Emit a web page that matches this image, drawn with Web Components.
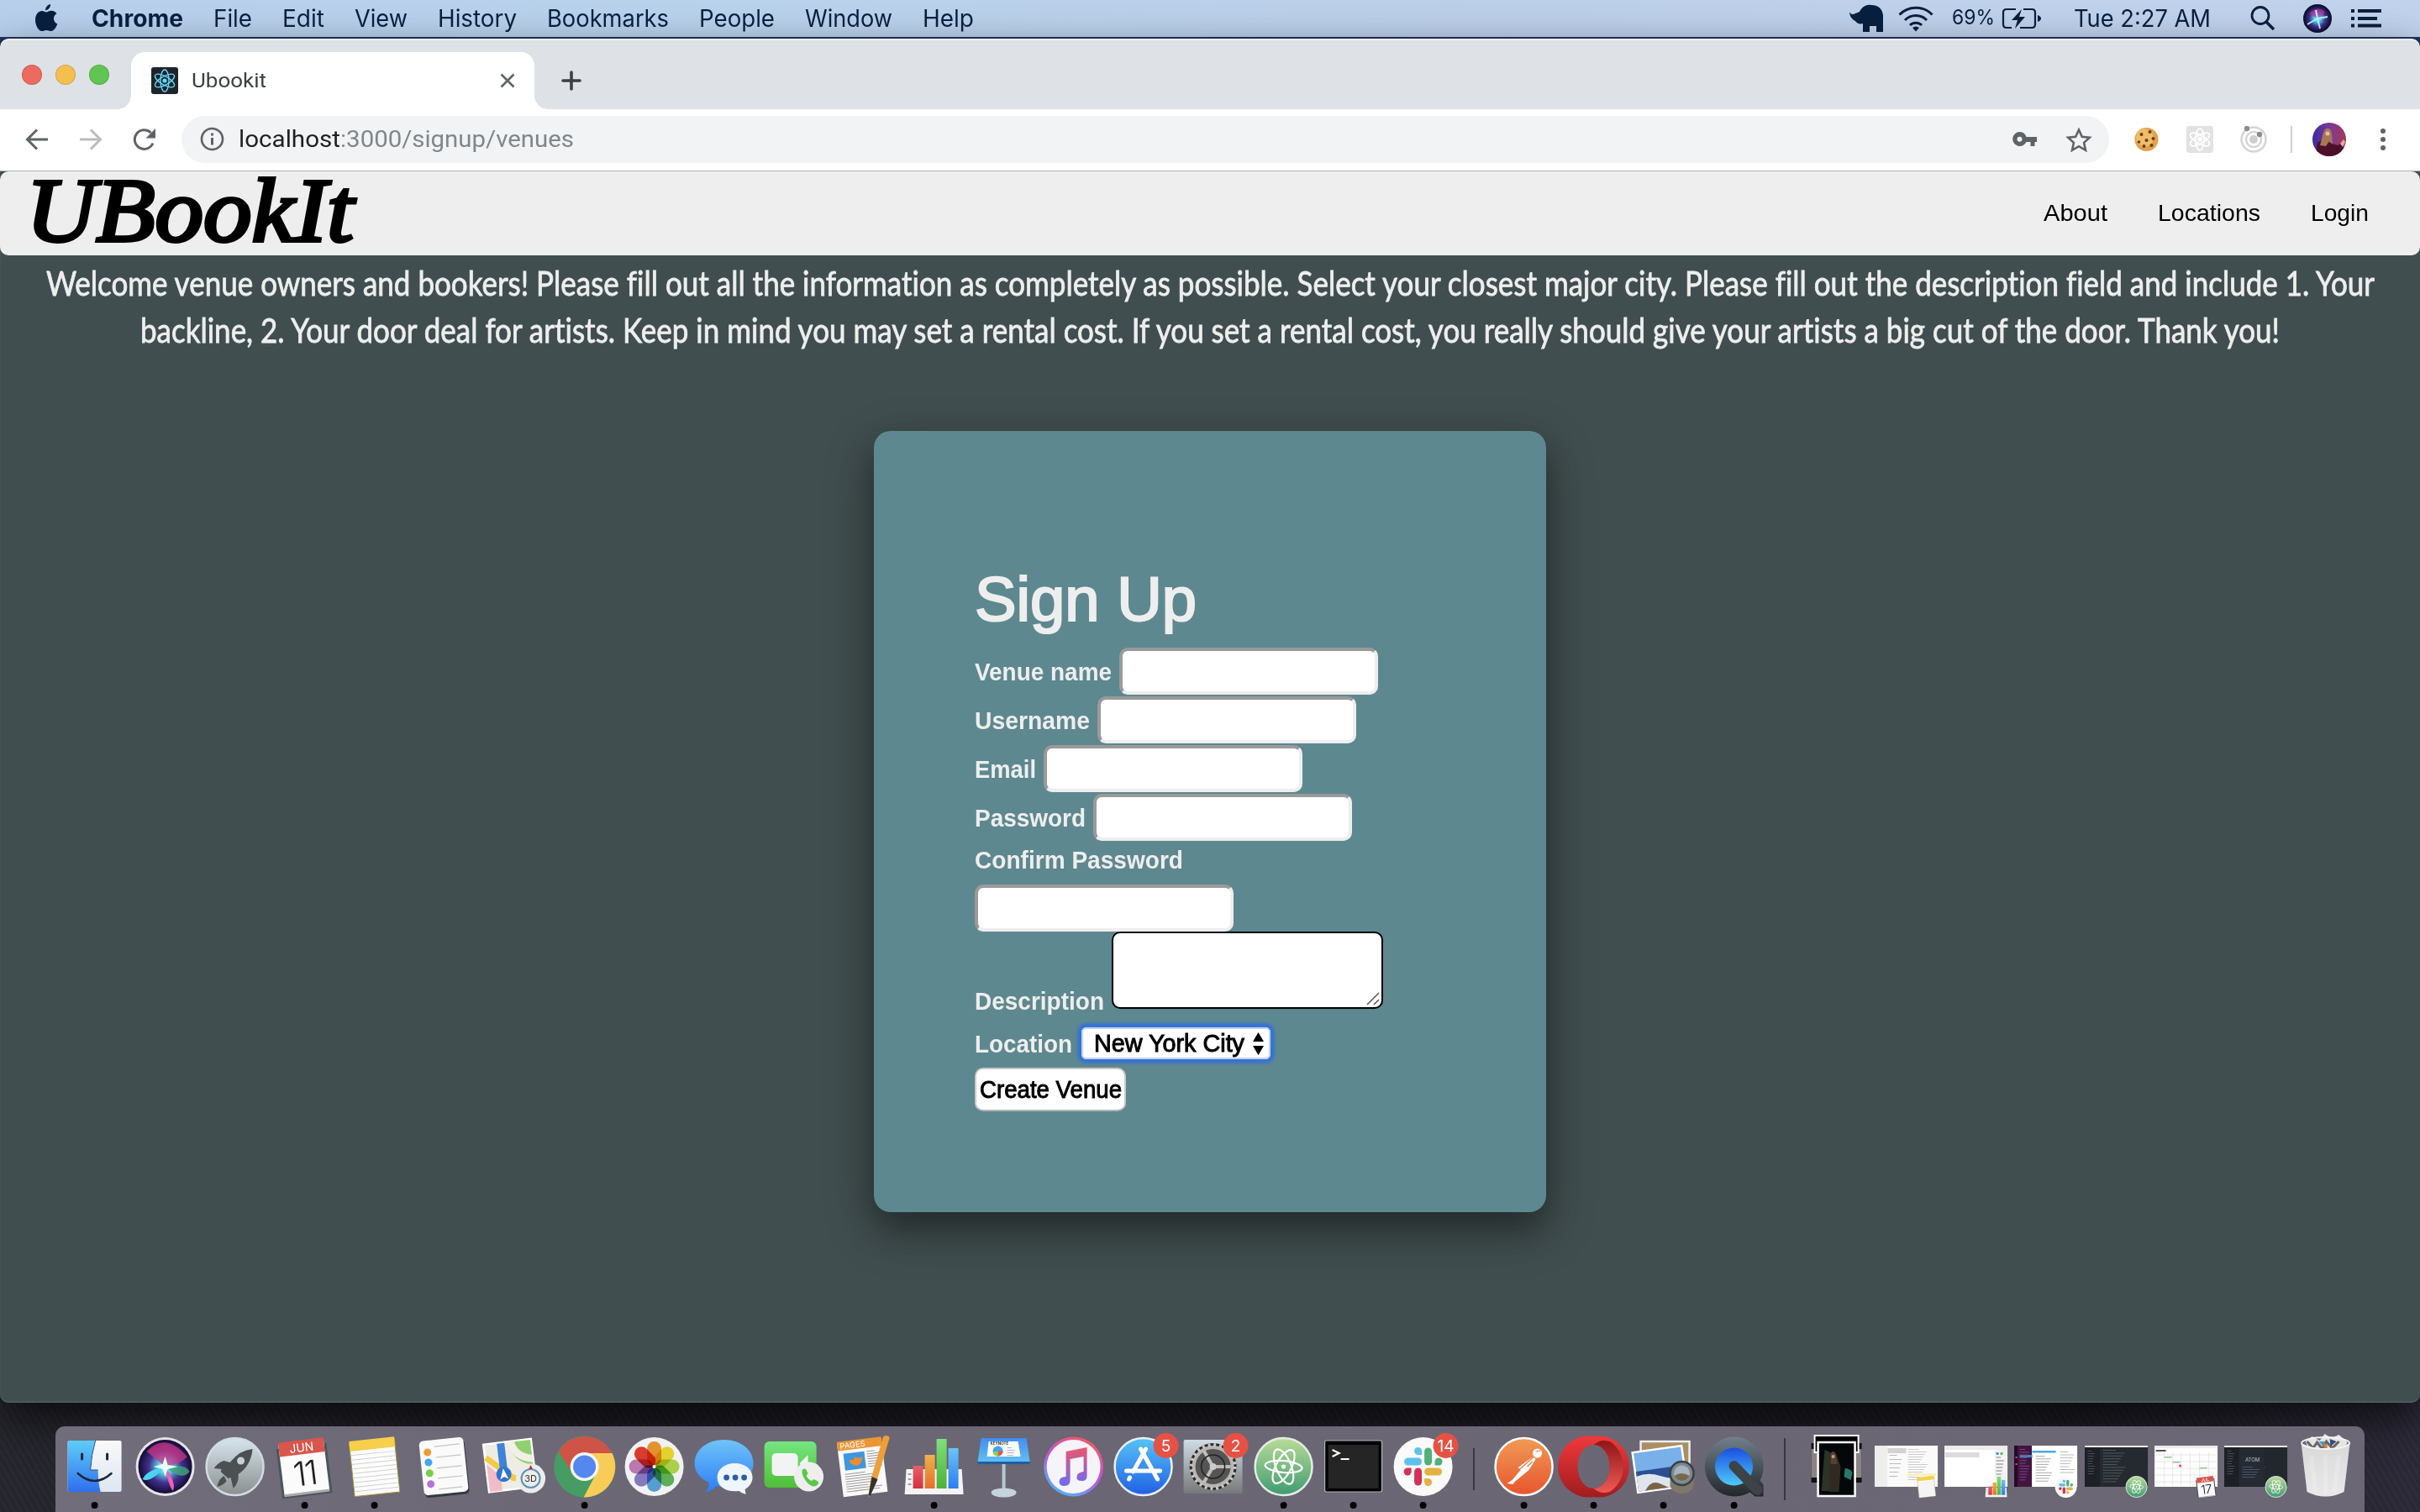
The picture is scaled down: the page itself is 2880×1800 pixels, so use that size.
<!DOCTYPE html>
<html lang="en">
<head>
<meta charset="utf-8">
<title>Ubookit</title>
<style>
html,body{margin:0;height:100%;overflow:hidden}
body{background:#1c1b22;font-family:Inter,"Liberation Sans",sans-serif}
</style>
</head>
<body>
<mac-desktop></mac-desktop>
<script>
const define = (name, html, after) => customElements.define(name, class extends HTMLElement {
  connectedCallback() {
    if (this.shadowRoot) return;
    const root = this.attachShadow({ mode: 'open' });
    root.innerHTML = typeof html === 'function' ? html(this) : html;
    if (after) after(this, root);
  }
});

/* One line of text set to an exact advance width. */
define('fit-text', `<style>
:host{display:inline-block;flex:none;white-space:nowrap}
span{display:inline-block;transform-origin:0 50%;white-space:pre}
</style><span><slot></slot></span>`, (el, root) => {
  const w = +el.getAttribute('w'), s = root.querySelector('span');
  const n = s.getBoundingClientRect().width;
  el.style.width = w + 'px';
  if (n) s.style.transform = `scaleX(${w / n})`;
});

const atomRings = (rx, ry, c, sw) => [0, 60, 120].map(a =>
  `<ellipse rx="${rx}" ry="${ry}" fill="none" stroke="${c}" stroke-width="${sw}" transform="rotate(${a + 30})"/>`).join('');

/* ---------- Menu bar ---------- */
const SIRI = `<radialGradient id="sg"><stop offset="0" stop-color="#dff"/><stop offset=".25" stop-color="#5ad0e8"/><stop offset=".6" stop-color="#43328f"/><stop offset="1" stop-color="#120b33"/></radialGradient>`;
define('mac-menubar', `<style>
:host{display:flex;height:44px;flex:none;align-items:center;justify-content:space-between;padding:0 46px 0 41px;box-sizing:border-box;
 background:linear-gradient(90deg,#b8cfeb,#b9d2ec 30%,#bccfe9 60%,#c1d2ec);color:#07203f;font:28px/44px Inter,sans-serif;border-bottom:0}
.l,.r{display:flex;align-items:center;height:44px}
.l{gap:36px}.l b{display:flex}svg{display:block;flex:none}
</style>
<div class="l">
<svg width="28" height="36" viewBox="0 0 28 36" style="margin-right:4px" fill="#07203f"><path d="M19 1c.4 3.300-2.400 7-5.800 7.400C12.700 5.200 15.600 1.600 19 1zM14 10.500c1.500 0 3.500-1.700 6.300-1.700 2.600 0 4.900 1.400 6.100 3.500-5 3-4.300 10 .9 12.300-1.400 4-4.200 8.500-7.500 8.500-2 0-3.100-1.200-5.500-1.200-2.500 0-3.600 1.200-5.500 1.200C5 33.100 1 26.200 1 19.700 1 13 5.200 9 9 9c2.200 0 3.800 1.500 5 1.500z"/></svg>
<b><fit-text w="109">Chrome</fit-text></b><fit-text w="46">File</fit-text><fit-text w="50">Edit</fit-text><fit-text w="63">View</fit-text><fit-text w="94">History</fit-text><fit-text w="145">Bookmarks</fit-text><fit-text w="90">People</fit-text><fit-text w="104">Window</fit-text><fit-text w="61">Help</fit-text>
</div>
<div class="r">
<svg width="42" height="34" viewBox="0 0 42 34" fill="#07203f"><path d="M1 9c1 3 4 4 7 2l5-2c3-6 8-9 14-8 8 0 13 4 14 12v20h-8v-7h-8v7h-8V23c-4 1-7 0-9-3C4 18 1 14 1 9z"/></svg>
<svg style="margin-left:17px" width="42" height="32" viewBox="0 0 42 32" fill="none" stroke="#07203f" stroke-width="3"><path d="M1.500 11.500a27 27 0 0 1 39 0M8 18a18 18 0 0 1 26 0M14 24a10 10 0 0 1 14 0"/><path d="M17 27q4-3 8 0l-4 4.500z" fill="#07203f" stroke="none"/></svg>
<fit-text w="51" style="font-size:24px;margin-left:22px;line-height:42px;height:44px">69%</fit-text>
<svg style="margin-left:8px" width="48" height="28" viewBox="0 0 48 28"><g fill="none" stroke="#07203f" stroke-width="2.200"><path d="M17 3H6Q2 3 2 7v14q0 4 4 4h6M26 3h10q4 0 4 4v14q0 4-4 4H22"/></g><path d="M43 10q4 1.500 4 4t-4 4zM24 3L12 16h7l-3 10 12-14h-7z" fill="#07203f"/></svg>
<fit-text w="163" style="margin-left:38px">Tue 2:27 AM</fit-text>
<svg style="margin-left:47px" width="30" height="30" viewBox="0 0 30 30" fill="none" stroke="#07203f" stroke-width="2.800"><circle cx="12" cy="11.500" r="10"/><path d="M19 19l9 9" stroke-width="3.500"/></svg>
<svg style="margin-left:33px" width="34" height="34" viewBox="-17 -17 34 34"><defs>${SIRI}</defs><circle r="16" fill="url(#sg)" stroke="#0b1533" stroke-width="2"/><path d="M-10-6Q0-16 9-8 5-2 0 0z" fill="#c035a0" opacity=".7"/><path d="M-12 7L0 0 3 12M0 0l12-2M0 0l-2-10" stroke="#aef4ff" stroke-width="2" fill="none"/></svg>
<svg style="margin-left:23px" width="36" height="22" viewBox="0 0 36 22" fill="#07203f"><path d="M0 0h4v4H0zM8 0h28v4H8zM0 9h4v4H0zM8 9h23v4H8zM0 17.500h4v4H0zM8 17.500h28v4H8z"/></svg>
</div>`);

/* ---------- Chrome tab strip ---------- */
define('chrome-tabs', `<style>
:host{display:flex;height:84px;flex:none;background:#dee1e6;border-radius:10px 10px 0 0;box-shadow:inset 0 2px 0 #eceef1;align-items:flex-end;padding-left:26px;box-sizing:border-box}
.lights{display:flex;gap:16px;height:82px;align-items:center}
i{width:24px;height:24px;border-radius:50%;box-sizing:border-box;border:1px solid #0002}
.tab{display:flex;align-items:center;position:relative;margin-left:26px;width:480px;height:68px;background:#fff;border-radius:16px 16px 0 0;padding:0 23px 0 24px;box-sizing:border-box;font:24px/28px Roboto,sans-serif;color:#3c4043}
.tab:before,.tab:after{content:"";position:absolute;bottom:0;width:16px;height:16px}
.tab:before{left:-16px;background:radial-gradient(circle at 0 0,transparent 15.500px,#fff 16px)}
.tab:after{right:-16px;background:radial-gradient(circle at 100% 0,transparent 15.500px,#fff 16px)}
svg{display:block;flex:none}.x{margin-left:auto}.plus{margin:0 0 22px 32px}
</style>
<div class="lights"><i style="background:#ed6a5e"></i><i style="background:#f5bf4f"></i><i style="background:#61c554"></i></div>
<div class="tab"><svg width="32" height="32" viewBox="-16 -16 32 32"><rect x="-16" y="-16" width="32" height="32" rx="3" fill="#20232a"/>${atomRings(13, 5, '#61dafb', 1.4)}<circle r="2.600" fill="#61dafb"/></svg>
<fit-text w="89" style="margin-left:16px">Ubookit</fit-text>
<svg class="x" width="18" height="18" viewBox="0 0 18 18" stroke="#5f6368" stroke-width="2.600"><path d="M1.500 1.500l15 15M16.500 1.500l-15 15"/></svg></div>
<svg class="plus" width="24" height="24" viewBox="0 0 24 24" stroke="#3c4043" stroke-width="3.600" stroke-linecap="round"><path d="M12 2v20M2 12h20"/></svg>`);

/* ---------- Chrome toolbar ---------- */
define('chrome-toolbar', `<style>
:host{display:flex;height:74px;flex:none;background:#fff;border-bottom:1px solid #b1b3b5;box-sizing:border-box;align-items:center;padding:0 0 2px 30px}
svg{display:block;flex:none}
.omni{display:flex;align-items:center;width:2294px;height:56px;border-radius:28px;background:#f1f3f4;margin-left:29px;padding:0 20px 0 22px;box-sizing:border-box;font:28px/40px Roboto,sans-serif;color:#202124}
.omni fit-text{padding-top:1px}
.omni .p{color:#80868b}.sep{width:2px;height:32px;background:#cfd1d4;margin-left:28px}
</style>
<svg width="28" height="26" viewBox="0 0 28 26" fill="none" stroke="#5f6368" stroke-width="3"><path d="M27 13H3M14 1.500L2.500 13 14 24.500"/></svg>
<svg style="margin-left:36px" width="28" height="26" viewBox="0 0 28 26" fill="none" stroke="#babcbe" stroke-width="3"><path d="M1 13h24M14 1.500L25.500 13 14 24.500"/></svg>
<svg style="margin-left:36px" width="29" height="28" viewBox="0 0 29 28"><path d="M24 18.500A11.300 11.300 0 1 1 21.500 6" fill="none" stroke="#5f6368" stroke-width="3"/><path d="M27 1v11.500H15.500z" fill="#5f6368"/></svg>
<div class="omni">
<svg width="29" height="29" viewBox="-14.500 -14.500 29 29"><circle r="12.500" fill="none" stroke="#5f6368" stroke-width="2.700"/><path d="M-1.500-7h3v3h-3zM-1.500-1.500h3v8.500h-3z" fill="#5f6368"/></svg>
<fit-text w="121" style="margin-left:17px">localhost</fit-text><fit-text class="p" w="278">:3000/signup/venues</fit-text>
<svg style="margin-left:auto" width="30" height="18" viewBox="0 0 30 18" fill="#5f6368"><path fill-rule="evenodd" d="M8.500 0a8.500 8.500 0 0 1 8 6H29v6h-2.500v5h-5v-5h-5a8.500 8.500 0 1 1-8-12zm0 5.800a3 3 0 1 0 0 6 3 3 0 0 0 0-6z"/></svg>
<svg style="margin-left:33px" width="32" height="30" viewBox="0 0 32 30" fill="none" stroke="#5f6368" stroke-width="2.600"><path d="M16 3.500l3.800 8.300 9 1-6.700 6.100 1.900 8.900-8-4.600-8 4.600 1.900-8.900-6.700-6.100 9-1z"/></svg>
</div>
<svg style="margin-left:29px" width="31" height="30" viewBox="-15.500 -15 31 30"><circle r="14" fill="#e2a14a"/><circle cx="-2" cy="-2" r="10.500" fill="#f0bd68"/><g fill="#6b3d17"><circle cx="-6" cy="-6" r="2"/><circle cx="4" cy="-9" r="2"/><circle cx="0" cy="1" r="2"/><circle cx="8" cy="-1" r="2"/><circle cx="-9" cy="3" r="1.800"/><circle cx="-3" cy="8" r="2"/><circle cx="6" cy="7" r="2"/></g></svg>
<svg style="margin-left:32px" width="32" height="32" viewBox="-16 -16 32 32"><rect x="-16" y="-16" width="32" height="32" rx="3" fill="#e2e2e2"/>${atomRings(13, 5, '#fff', 1.7)}<circle r="3" fill="#fff"/></svg>
<svg style="margin-left:32px" width="32" height="32" viewBox="-16 -16 32 32" fill="none" stroke="#d5d5d5" stroke-width="2.500"><circle r="14.500"/><circle r="9"/><circle r="5" fill="#cfcfcf" stroke="none"/><g fill="#8d8d8d" stroke="none"><circle cx="-8" cy="-13" r="3.200"/><circle cx="7" cy="-6" r="3.200"/></g></svg>
<div class="sep"></div>
<svg style="margin-left:24px" width="40" height="40" viewBox="-20 -20 40 40"><defs><clipPath id="av"><circle r="20"/></clipPath><linearGradient id="ag"><stop offset="0" stop-color="#3c2aa0"/><stop offset=".5" stop-color="#7a3a9a"/><stop offset="1" stop-color="#a53a55"/></linearGradient></defs><g clip-path="url(#av)"><path d="M-20-20h40v40h-40z" fill="url(#ag)"/><path d="M-17 20l3-16 6-4 9 4 9 3 7-4V20z" fill="#4c0f2c"/><path d="M-7-8q2-6 6-5 4 1 4 7l1 12-4-4-4 6-7-1z" fill="#a97752"/><circle cx="-2" cy="-7" r="2.500" fill="#e9bda0"/><path d="M13 5l4-5 2 3-3 6z" fill="#e5ac90"/></g></svg>
<svg style="margin-left:41px" width="6" height="28" viewBox="0 0 6 28" fill="#5f6368"><circle cx="3" cy="4" r="3"/><circle cx="3" cy="14" r="3"/><circle cx="3" cy="24" r="3"/></svg>`);

/* ---------- Site ---------- */
define('site-nav', `<style>
:host{display:flex;height:100px;flex:none;background:#eee;border-radius:10px;align-items:center;justify-content:space-between;padding:0 60px 0 31px;box-sizing:border-box;color:#000}
.logo{font:italic 107px/94px "Liberation Serif",serif;-webkit-text-stroke:4px #000;height:100px}
nav{display:flex;gap:60px;font:28px/42px "Liberation Sans",sans-serif;margin-right:1px}
</style><div class="logo"><fit-text w="390">UBookIt</fit-text></div>
<nav><fit-text w="76">About</fit-text><fit-text w="122">Locations</fit-text><fit-text w="69">Login</fit-text></nav>`);

define('welcome-banner', `<style>
:host{display:flex;flex-direction:column;align-items:center;padding-top:5px;flex:none;font:40px/56px Lato,sans-serif;color:#eee;-webkit-text-stroke:.8px #eee;font-variant-ligatures:none}
</style><fit-text w="2771">Welcome venue owners and bookers! Please fill out all the information as completely as possible. Select your closest major city. Please fill out the description field and include 1. Your</fit-text>
<fit-text w="2546">backline, 2. Your door deal for artists. Keep in mind you may set a rental cost. If you set a rental cost, you really should give your artists a big cut of the door. Thank you!</fit-text>`);

define('form-row', `<style>
:host{display:flex;align-items:center;height:56px}
.t{display:flex;font-weight:700;line-height:22px;height:20px;color:#eee}
</style><div class="t"><slot name="label"></slot></div><slot></slot>`);

define('signup-card', `<style>
:host{display:flex;flex-direction:column;width:800px;height:930px;box-sizing:border-box;padding:161px 120px 0;border-radius:20px;background:#5e888f;color:#eee;
 box-shadow:0 20px 60px #00000047,0 20px 40px #00000047;font:29px/40px "Liberation Sans",sans-serif}
h1{margin:0 0 17px;font-weight:400;font-size:74px;line-height:80px;-webkit-text-stroke:2.200px #eee;display:flex}
form-row{margin-bottom:2px}
input{box-sizing:border-box;width:308px;height:56px;border:4px solid;border-color:#9a9a9a #eee #eee #9a9a9a;border-radius:10px;background:#fff;outline:0;padding:0;margin:0 0 0 9px}
.area{display:flex;position:relative;margin-left:9px}
textarea{box-sizing:border-box;width:323px;height:92px;border:2px solid #000;border-radius:10px;resize:none;background:#fff;margin:0}
.area svg{position:absolute;right:4px;bottom:4px}
.sel{display:flex;align-items:center;justify-content:space-between;width:225px;height:38px;box-sizing:border-box;background:#fff;border-radius:6px;margin-left:11px;padding:0 8px 0 15px;color:#000;-webkit-text-stroke:1px #000;
 box-shadow:inset 0 0 0 2px #c3d4f4,0 0 3px 5px #3874d0}
.sel svg{-webkit-text-stroke:0}
button{display:flex;align-items:center;justify-content:center;width:180px;height:52px;box-sizing:border-box;border:2px solid #c9c9c9;border-bottom-color:#b5b5b5;border-radius:10px;background:#fff;color:#000;font:29px/40px "Liberation Sans",sans-serif;padding:0;-webkit-text-stroke:1px #000}
.c{line-height:42px;height:40px;font-weight:700;margin:0 0 10px;display:flex}
</style>
<h1><fit-text w="264">Sign Up</fit-text></h1>
<form-row><fit-text slot="label" w="163">Venue name</fit-text><input></form-row>
<form-row><fit-text slot="label" w="137">Username</fit-text><input></form-row>
<form-row><fit-text slot="label" w="73">Email</fit-text><input></form-row>
<form-row><fit-text slot="label" w="132">Password</fit-text><input></form-row>
<div class="c"><fit-text w="248">Confirm Password</fit-text></div>
<input style="margin:0;flex:none">
<form-row style="height:92px;align-items:flex-end;margin:0"><fit-text slot="label" w="154">Description</fit-text><div class="area"><textarea></textarea><svg width="16" height="16" viewBox="0 0 16 16" stroke="#555" stroke-width="1.500"><path d="M1 15L15 1M9 15l6-6"/></svg></div></form-row>
<form-row style="height:40px;margin:21px 0 9px"><fit-text slot="label" w="116">Location</fit-text><div class="sel"><fit-text w="179">New York City</fit-text><svg width="13" height="27" viewBox="0 0 13 27"><path d="M6.500 0L13 11H0zM6.500 27L13 16H0z"/></svg></div></form-row>
<button><fit-text w="169">Create Venue</fit-text></button>`);

define('chrome-window', `<style>
:host{display:flex;flex-direction:column;height:1624px;flex:none;border-radius:10px;overflow:hidden;background:#414e4f;box-shadow:0 20px 50px #000a}
main{display:flex;flex-direction:column;flex:1;box-shadow:inset 0 -2px 0 #56656680,inset 1px 0 0 #5665664d;border-radius:0 0 10px 10px}
signup-card{align-self:center;margin-top:92px;flex:none}
</style><chrome-tabs></chrome-tabs><chrome-toolbar></chrome-toolbar>
<main><site-nav></site-nav><welcome-banner></welcome-banner><signup-card></signup-card></main>`);

/* ---------- Dock: each icon is centred on 0,0 ---------- */
const lg = (id, a, b) => `<linearGradient id="${id}" x2="0" y2="1"><stop offset="0" stop-color="${a}"/><stop offset="1" stop-color="${b}"/></linearGradient>`;
const rows = (x, w, y0, n, step, c, h = 1) => Array.from({ length: n }, (_, i) => `<rect x="${x}" y="${y0 + i * step}" width="${w * (0.55 + ((i * 37) % 45) / 100)}" height="${h}" fill="${c}"/>`).join('');
const badge = n => `<circle cx="27" cy="-25" r="15" fill="#e65145"/><text x="27" y="-18" text-anchor="middle" font-family="Inter" font-size="19" fill="#fff">${n}</text>`;
const calendar = (m, d) => `<g transform="rotate(-7)"><path d="M-31-25h60v60h-60z" fill="#4c555b"/><path d="M-28-29h54v61h-54z" fill="#fbfbfb"/><path d="M-28-32h54v17h-54z" fill="#d9564c"/><path d="M-28 30h54v3h-54z" fill="#aaa"/><text y="-18" x="-1" text-anchor="middle" font-size="14" fill="#fff" font-family="Inter">${m}</text><text y="22" x="-1" text-anchor="middle" font-size="40" font-weight="300" fill="#222" font-family="Inter" letter-spacing="-2">${d}</text></g>`;
const notes = `<g transform="rotate(-6)"><path d="M-27-31h54v64h-54z" fill="#fdfdfd" stroke="#a58f3a" stroke-width="1"/><path d="M-27-33h54v12h-54z" fill="#f7cf4b"/>${[0,1,2,3,4,5,6,7,8].map(i => `<path d="M-26 ${-16 + i * 5.4}h52" stroke="#d0d0d0" stroke-width="1"/>`).join('')}</g>`;
const numbers = `<path d="M-33 3h66l2 30h-70z" fill="#f4f4f4"/><path d="M-31 9h4M-31 15h4M-31 21h4" stroke="#888" stroke-width="1.500"/><defs>${lg('n1','#e8606a','#d2323e')}${lg('n2','#f2b14b','#e2702b')}${lg('n3','#7fe07a','#4db23a')}${lg('n4','#6cc4f5','#2c7cf0')}</defs><rect x="-25" y="-1" width="12" height="27" fill="url(#n1)"/><rect x="-11" y="-14" width="12" height="40" fill="url(#n2)"/><rect x="3" y="-33" width="12" height="59" fill="url(#n3)"/><rect x="17" y="-22" width="12" height="48" fill="url(#n4)"/>`;
const slackMark = `<g stroke-width="9" stroke-linecap="round"><path d="M-18-6h12" stroke="#5cc2ec"/><path d="M6-18v12" stroke="#4fb07a"/><path d="M6 6h12" stroke="#e4b243"/><path d="M-6 6v12" stroke="#d03357"/></g><path d="M-1.500-14v-4.500a4.500 4.500 0 1 0-4.500 4.500z" fill="#5cc2ec"/><path d="M14-1.500h4.500a4.500 4.500 0 1 0-4.500-4.500z" fill="#4fb07a"/><path d="M1.500 14v4.500a4.500 4.500 0 1 0 4.500-4.500z" fill="#e4b243"/><path d="M-14 1.500h-4.500a4.500 4.500 0 1 0 4.500 4.500z" fill="#d03357"/>`;
const slack = `<circle r="35" fill="#fafafa"/>${slackMark}`;
const atom = `<defs>${lg('at','#b9dc96','#3f9c72')}</defs><circle r="34" fill="url(#at)" stroke="#e4ece4" stroke-width="2.500"/><g fill="none" stroke="#fff" stroke-width="2.200"><ellipse rx="22" ry="7" transform="rotate(5)"/><ellipse rx="22" ry="9" transform="rotate(68)"/><ellipse rx="22" ry="9" transform="rotate(-62)"/></g><circle r="2.600" fill="#fff"/>`;
const mini = (g, s = .37) => `<g transform="translate(24 24) scale(${s})">${g}</g>`;
const thumb = (fill, inner = '') => `<rect x="-37.500" y="-25" width="75" height="49" fill="${fill}"/>${inner}`;
const code = `<path d="M-37.500-25h75v2h-75z" fill="#eee"/><path d="M-37.500-23h18v47h-18z" fill="#1d2026"/>${rows(-34, 9, -19, 10, 3, '#454b55')}${rows(-16, 28, -20, 12, 3.400, '#4d5a55')}`;

const ICONS = {
  finder: `<defs>${lg('f1','#5fcdf8','#2f6fee')}${lg('f2','#fafafa','#dde6f3')}</defs><rect x="-32" y="-31" width="64" height="61" rx="2" fill="url(#f2)"/><path d="M-30-31h31Q-4-14-5 4h9Q4 18 7 30h-37q-2 0-2-2v-57q0-2 2-2z" fill="url(#f1)"/><path d="M-15-15v6M15-15v6" stroke="#1b2734" stroke-width="3" stroke-linecap="round"/><path d="M-20 8Q0 26 20 8" fill="none" stroke="#1b2734" stroke-width="2.400" stroke-linecap="round"/><path d="M-5 4h9M1-31Q-4-14-5 4" fill="none" stroke="#27557c" stroke-width="1"/>`,
  siri: `<defs>${SIRI}</defs><circle r="35" fill="#e6e3e4"/><circle r="32" fill="url(#sg)"/><path d="M-22-18Q0-42 26-12 20-4 0 0z" fill="#cc3585" opacity=".75"/><path d="M0 0Q24-4 29 6 20 18 0 0z" fill="#3fa87c" opacity=".8"/><path d="M0 0Q-18 20-27 15-22 4 0 0z" fill="#48d6ef"/><path d="M0 0Q3 20 9 29 14 20 0 0z" fill="#ef5fb4"/><path d="M0-12L3-2 15 0 3 3 0 12-3 3-14 0-3-3z" fill="#e8ffff"/>`,
  launchpad: `<defs>${lg('lp','#d6e6ee','#8c8e8d')}</defs><circle r="34" fill="url(#lp)" stroke="#cfdce3" stroke-width="2.500"/><path d="M21-21Q6-20-6-5l-7-2q-7 2-12 9l9 1-1 3 9 8 3-1 3 13q7-7 6-17 15-10 17-30z" fill="#4b5053"/><circle cx="7" cy="-7" r="4.500" fill="#c6d0d5"/><path d="M-13 11q-7 4-8 13 8-2 11-7z" fill="#4b5053"/>`,
  calendar: calendar('JUN', '11'),
  notes,
  reminders: `<g transform="rotate(-6)"><rect x="-26" y="-30" width="53" height="65" rx="5" fill="#333a3c"/><rect x="-27" y="-33" width="53" height="65" rx="5" fill="#fafafa"/><g><circle cx="-18" cy="-19" r="4.500" fill="#f29a35"/><circle cx="-18" cy="-7" r="4.500" fill="#45a6ee"/><circle cx="-18" cy="6" r="4.500" fill="#76cf4c"/><circle cx="-18" cy="19" r="4.500" fill="#b772d9"/></g><path d="M-9-25h30M-9-12h30M-9 1h30M-9 13h30M-9 26h28" stroke="#c4c4c4" stroke-width="1.200"/></g>`,
  maps: `<g transform="translate(-5 0) rotate(-7)"><path d="M-29-30h57v57h-57z" fill="#efece4" stroke="#fff" stroke-width="2.500"/><path d="M0-29h27v30Q4-4 0-29z" fill="#8fd16f"/><path d="M8-29q2 14 19 18v9Q3-6-1-29z" fill="#f3efe6"/><path d="M-28-14l30 28h25" stroke="#f6c945" stroke-width="7" fill="none"/><path d="M-28-6l15 16v17h-15z" fill="#f2bcc6"/><path d="M-13-29h9v35h-9z" fill="#3f82d6"/><circle cx="-9" cy="8" r="9" fill="#2f74d2"/><path d="M-9 1l5 13-5-3-5 3z" fill="#fff"/></g><circle cx="19" cy="14" r="17.500" fill="#ececec"/><circle cx="19" cy="14" r="11" fill="none" stroke="#5b93b5" stroke-width="2"/><path d="M19-2l2.500 5h-5z" fill="#c33"/><text x="19" y="18" font-size="11" text-anchor="middle" font-family="Inter" fill="#333">3D</text>`,
  chrome: `<circle r="36.500" fill="#469c62"/><path d="M0-16H33A36.500 36.500 0 0 1-1 36.500L14 8z" fill="#f7cd57"/><path d="M-31-18A36.500 36.500 0 0 1 33-16H0L-14 8z" fill="#cf5346"/><circle r="17" fill="#f5f5f5"/><circle r="13.500" fill="#5488ee"/>`,
  photos: `<circle r="35" fill="#f2f2f2"/><g>${['#f09a32','#efdd30','#b5da4e','#62b85a','#5aa6de','#8c7fc8','#c47fb9','#e63e30'].map((c, i) => `<rect x="-8.500" y="-30" width="17" height="29" rx="8.500" fill="${c}" style="mix-blend-mode:multiply" transform="rotate(${i * 45})"/>`).join('')}</g><circle r="2" fill="#fff"/>`,
  messages: `<defs>${lg('ms','#6fc3f8','#2d7ef5')}</defs><path d="M0-32c20 0 35 12 35 28S20 24 0 24q-5 0-9-1-6 7-13 7 5-5 4-11-17-8-17-23c0-16 15-28 35-28z" fill="url(#ms)"/><path d="M13-4c12 0 21 7 21 17 0 6-4 11-9 14l1 6q-5-1-8-4c-15 2-26-5-26-16 0-10 9-17 21-17z" fill="#eef5fb"/><g fill="#2a5ea8"><circle cx="3" cy="13" r="3.400"/><circle cx="13.500" cy="13" r="3.400"/><circle cx="24" cy="13" r="3.400"/></g>`,
  facetime: `<defs>${lg('ft','#74e680','#4fbf35')}</defs><rect x="-35" y="-30" width="62" height="55" rx="6" fill="url(#ft)"/><rect x="-26" y="-16" width="31" height="27" rx="5" fill="#f3f3f3"/><path d="M7-4l10-10v22z" fill="#f3f3f3"/><circle cx="18" cy="12" r="17.500" fill="#eee"/><path d="M10 4q3-3 5 0l2 4-2 3q2 4 6 6l3-2 4 2q3 2 0 5-5 4-12-3-7-8-6-15z" fill="#5ac942"/>`,
  pages: `<g transform="rotate(-7)"><path d="M-28-31h53v64h-53z" fill="#fafafa"/><path d="M-28-33h53v11h-53z" fill="#ec9535"/><text x="-25" y="-24" font-size="9.500" font-family="Inter" fill="#fff">PAGES</text><path d="M-22-18h25v20h-25z" fill="#4196e0"/><path d="M-16-10q6 2 7-3 5 4 9 1-2 9-7 10-8-1-9-8z" fill="#f08c28"/>${rows(6, 17, -18, 7, 3, '#999')}${rows(-23, 44, 6, 8, 3, '#999')}</g><path d="M26-37q5 0 5 3L15 20l-8 16-1-1 2-17 15-52q1-3 3-3z" fill="#eca03a"/><path d="M10 12l7 3-9 20-2-1z" fill="#333"/>`,
  numbers,
  keynote: `<defs>${lg('kn','#3f8ff0','#62bdf3')}</defs><path d="M-2-4h4v38h-4z" fill="#b9c5d0"/><ellipse cy="31" rx="15" ry="5.500" fill="#c5d3dd"/><path d="M-27-34h54l4 28h-62z" fill="url(#kn)"/><path d="M-31-6h62v3h-62z" fill="#1d5f9d"/><path d="M-18-30h35l3 18h-40z" fill="#fafafa"/><text x="-16" y="-26" font-size="4.500" font-weight="700" font-family="Inter" fill="#333">KEYNOTE</text><circle cx="-7" cy="-18.500" r="6" fill="#3fa3ee"/><path d="M-7-18.500h6a6 6 0 0 1-6 6z" fill="#e5534b"/><path d="M-7-18.500v6a6 6 0 0 1-6-5z" fill="#8bd54b"/>${rows(4, 10, -23, 4, 3, '#a8b8e0')}`,
  itunes: `<defs><linearGradient id="it" x1=".8" y1="0" x2=".3" y2="1"><stop offset="0" stop-color="#f75c52"/><stop offset=".5" stop-color="#c252d8"/><stop offset="1" stop-color="#4eb5f7"/></linearGradient>${lg('in','#f0566a','#6a6cf6')}</defs><circle r="35.500" fill="url(#it)"/><circle r="32" fill="#f5f4f8"/><path d="M-9-18l25-5v34q0 6-6 6-7 0-6-5 0-5 8-6v-18l-16 3v25q0 7-7 7-6 0-6-5 0-6 8-6z" fill="url(#in)"/>`,
  appstore: `<defs>${lg('as','#57c3f8','#2060e4')}</defs><circle r="34" fill="url(#as)" stroke="#eaf0f5" stroke-width="2.500"/><path d="M3-21L-12 6M-16 13l-1 2M-3-21L17 15M-20 5H20" stroke="#fff" stroke-width="5" stroke-linecap="round"/>${badge(5)}`,
  prefs: `<defs>${lg('pf','#cfdde4','#76797a')}</defs><rect x="-35" y="-32" width="70" height="64" rx="2" fill="url(#pf)"/><circle r="28" fill="#2a2a2a"/><circle r="23" fill="#555" stroke="#b8b6b2" stroke-width="4"/><circle r="26" fill="none" stroke="#c9c7c4" stroke-width="4" stroke-dasharray="3 3.800"/><path d="M0 0h21M0 0L-11-19M0 0L-11 19" stroke="#c0bebb" stroke-width="4"/><circle r="4" fill="#ccc"/><circle r="14" fill="none" stroke="#222" stroke-width="1.500"/>${badge(2)}`,
  atom,
  terminal: `<rect x="-34" y="-31" width="68" height="61" rx="2" fill="#000" stroke="#a9b6b8" stroke-width="1.200"/><rect x="-30" y="-26" width="60" height="52" fill="#252525"/><path d="M-25-20l8 4-8 4M-15-9h10" stroke="#fff" stroke-width="2.200" fill="none"/>`,
  slack: slack + badge(14),
  postman: `<defs>${lg('pm','#f09a55','#e8552f')}</defs><circle r="34" fill="url(#pm)" stroke="#fff" stroke-width="2.500"/><circle cx="16" cy="-16" r="5.500" fill="#fff"/><path d="M11-12L-7 1l3 3L-14 16-20 20l7 1 2-3L6 4l8-13z" fill="#fff"/><path d="M12-12L-7 5M10-6l-6 6M14-18l6-1" stroke="#e8743f" stroke-width="1.200"/>`,
  opera: `<defs>${lg('op','#f0393b','#a01c20')}${lg('o2','#8f1518','#ee5a55')}</defs><path fill-rule="evenodd" d="M0-36a36.500 36.500 0 1 1 0 72 36.500 36.500 0 1 1 0-72zM0-26c-11 0-19 12-19 26S-11 26 0 26 19 14 19 0 11-26 0-26z" fill="url(#op)"/><path d="M0-26q9-8 20-3.500A36 36 0 0 1 20 29.500Q9 34 0 26C11 26 19 14 19 0S11-26 0-26z" fill="url(#o2)"/>`,
  preview: `<path d="M-27-30h58v48h-58z" fill="#a98f63" stroke="#eee" stroke-width="2.500"/><g transform="translate(-5 2) rotate(-8)"><path d="M-29-23h59v48h-59z" fill="#79b0ea" stroke="#fff" stroke-width="2.500"/><path d="M-28 0h57v24h-57z" fill="#2c4f94"/><path d="M-28 6q14-4 28 3t29 5v10h-57z" fill="#dce6ec"/><path d="M-20 24q8-12 18-6l10 6z" fill="#7a6445"/></g><path d="M8 9h28v14q-3 9-14 9T8 23z" fill="#7f7769"/><circle cx="22" cy="8" r="14" fill="#7b8790" stroke="#3a3f44" stroke-width="2.500"/><circle cx="22" cy="8" r="9.500" fill="#a5b4bf"/><path d="M13 11q8-6 18 0-3 6-9 6t-9-6z" fill="#77684c"/>`,
  quicktime: `<defs>${lg('qt','#70808c','#23272b')}${lg('q2','#1a4fe0','#4fc9f8')}</defs><path d="M0-35.500a35.500 35.500 0 0 1 31 52l4 5v14H25l-6-5A35.500 35.500 0 1 1 0-35.500z" fill="url(#qt)"/><circle r="22.500" fill="url(#q2)"/><path d="M0-1l28 29" stroke="#3d4347" stroke-width="12" stroke-linecap="round"/>`,
  stack: `<path d="M-30-28h60v47h-60z" fill="#111"/><path d="M-30-21h60v34h-60z" fill="#8a8583"/><path d="M-26-37h52v20h-52z" fill="#000" stroke="#fff" stroke-width="2"/><path d="M-22-29h44v64h-44z" fill="#05080a" stroke="#fff" stroke-width="2.500"/><path d="M-14-20l8 4 2 45h-14z" fill="#45533a" opacity=".6"/><path d="M-8-14q4-8 8 0l5 14-2 30h-12l1-24z" fill="#2f2a22"/><path d="M-7-15q3-6 6 0l2 12h-8z" fill="#5a4030"/><circle cx="-4" cy="-12" r="2" fill="#c79a7c"/><path d="M10 2q6 0 9 5l-2 9-8-4z" fill="#2a7766"/>`,
  t1: thumb('#fafafa', `<path d="M-37.500-25h15v49h-15z" fill="#eeeeec"/><path d="M-22-22h22v6h-22z" fill="#d3d3d3"/>${rows(-20, 16, -14, 6, 5, '#bbb')}${rows(2, 24, -21, 13, 3, '#ccc')}<path d="M1 8h35v3H1z" fill="#f6efc6"/>` + mini(notes)),
  t2: thumb('#fff', `<path d="M-37.500-25h75v5h-75z" fill="#ececec"/><path d="M-37-17h41v6h-41z" fill="#dcdcdc"/><path d="M22-20h15v44h-15z" fill="#f3f3f3"/><path d="M24-17h3v3h-3z" fill="#4193e8"/><path d="M29-17h3v3h-3z" fill="#5fb95a"/>${rows(24, 10, -12, 6, 4, '#bbb', 2)}` + mini(numbers)),
  t3: thumb('#fff', `<path d="M-37.500-25h21v49h-21z" fill="#431442"/><path d="M-37.500-25h4v49h-4z" fill="#27082a"/><path d="M-31-14h15v3h-15z" fill="#3f83c4"/><path d="M-36-12h2v2h-2zM-36-4h2v2h-2z" fill="#e24a74"/><path d="M-16-19h28v2.500h-28z" fill="#4ba8e3"/>${rows(-31, 12, -21, 12, 3.300, '#754b78')}${rows(-12, 20, -13, 10, 3.300, '#aaa')}${rows(17, 18, -18, 8, 3.500, '#bbb')}` + mini(slack)),
  t4: thumb('#252930', code + mini(atom)),
  t5: thumb('#fdfdfd', `<path d="M-37.500-25h75v3h-75z" fill="#ececec"/><path d="M-26-17v40M-16-17v40M-6-17v40M5-17v40M16-17v40M27-17v40M-37-14h74M-37-6h74M-37 2h74M-37 10h74M-37 18h74" stroke="#e2e2e2" stroke-width=".8"/><path d="M-36-20h12v2h-12z" fill="#555"/><circle cx="-7" cy="-1" r="1.500" fill="#e33"/><path d="M-26-12h9v1.500h-9zM-16-6h9v1.500h-9zM16 1h9v1.500h-9z" fill="#8c8"/>` + mini(calendar('JUL', '17'))),
  t6: thumb('#22262d', code + `<path d="M-20-22h30v45h-30z" fill="#262b33"/><text x="-4" y="-6" font-size="6" text-anchor="middle" font-family="Inter" fill="#bbb">ATOM</text>${rows(-16, 22, 0, 5, 3, '#4a5568')}` + mini(atom)),
  trash: `<defs>${lg('tr','#d9d9da','#e9e9ea')}</defs><path d="M-24-30l8-6 9 5 6-8 8 5 9-4 10 9-4 8h-42z" fill="#e5e5e5"/><path d="M-22-30l7 8 5-7 6 8 5-9 7 8 8-8" stroke="#666" stroke-width="3" fill="none"/><path d="M-8-30h8l-3 6z" fill="#4f9cb3"/><path d="M5-33l8 3-7 6z" fill="#384a78"/><path d="M-2-27h4v5h-4z" fill="#e07a3c"/><path d="M-29-28Q0-14 29-28L22 30Q0 41-22 30z" fill="url(#tr)"/><path d="M-17-12l5 42M0-14v47M16-14l-6 44" stroke="#f8f8f8" stroke-width="5" opacity=".25"/><ellipse cy="-28" rx="28.500" ry="7" fill="none" stroke="#f5f5f5" stroke-width="1.800"/>`
};

define('dock-item', el => `<style>
:host{display:block;width:83.200px;height:102px;flex:none}svg{display:block;overflow:visible}
</style><svg width="83.200" height="102" viewBox="-41.600 -48 83.200 102">${ICONS[el.getAttribute('icon')]}${el.hasAttribute('open') ? '<circle cy="46" r="4" fill="#000"/>' : ''}</svg>`);

const items = s => s.split(' ').map(n => `<dock-item icon="${n.replace('*', '')}"${n.includes('*') ? ' open' : ''}></dock-item>`).join('');
define('mac-dock', `<style>
:host{display:flex;width:2748px;height:102px;box-sizing:border-box;padding-left:5.400px;background:linear-gradient(90deg,#716d7b,#6a6674 30%,#6b6775);border-radius:11px 11px 0 0}
i{display:flex;flex:none;justify-content:center;padding-top:26px;box-sizing:border-box}
i:before{content:"";width:2px;height:50px;background:#3a3744}
.b{padding-top:14px}.b:before{height:74px}
</style>${items('finder* siri launchpad calendar* notes* reminders maps chrome* photos messages facetime pages numbers* keynote itunes appstore prefs atom* terminal* slack*')}
<i style="width:36.800px"></i>${items('postman* opera* preview* quicktime*')}
<i class="b" style="width:39.200px"></i>${items('stack t1 t2 t3 t4 t5 t6 trash')}`);

define('mac-desktop', `<style>
:host{display:flex;flex-direction:column;width:2880px;height:1800px;overflow:hidden;background:linear-gradient(#1f3560 0 200px,transparent 200px),repeating-linear-gradient(60deg,#ffffff05 0 3px,transparent 3px 7px),linear-gradient(90deg,#25252d,#1c1b22 25%,#1c1b22 85%,#2b2937)}
chrome-window{margin-top:2px}mac-dock{margin:28px 0 0 66px;flex:none}
</style><mac-menubar></mac-menubar><chrome-window></chrome-window><mac-dock></mac-dock>`);
</script>
</body>
</html>
